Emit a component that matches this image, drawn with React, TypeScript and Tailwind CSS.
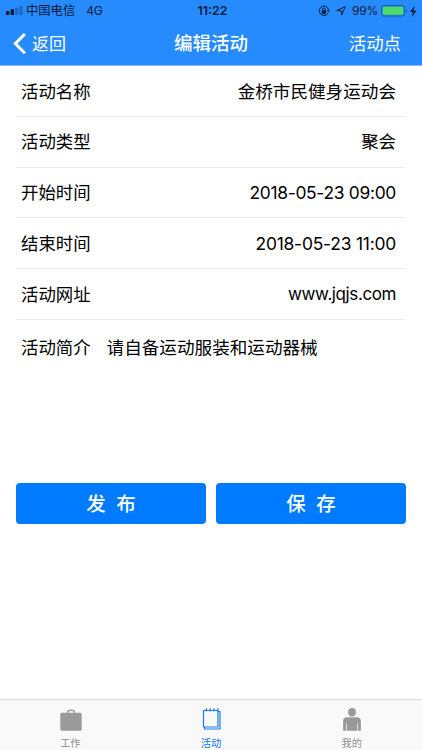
const rows = [
  { label: "活动名称", value: "金桥市民健身运动会", style: "text-[17.6px]" },
  { label: "活动类型", value: "聚会", style: "tracking-normal" },
  { label: "开始时间", value: "2018-05-23 09:00", style: "tracking-[-0.3px]" },
  { label: "结束时间", value: "2018-05-23 11:00", style: "tracking-[-0.2px]" },
  { label: "活动网址", value: "www.jqjs.com", style: "text-[17px] tracking-[-0.4px]" },
];

function StatusBar() {
  return (
    <div className="relative flex h-[22px] items-center justify-between pr-[5px] pl-[6px] text-[12px] leading-none text-[#041a38]">
      <div className="flex items-center">
        <svg width="18" height="9" viewBox="0 0 18 9">
          <rect x="0" y="5" width="3.4" height="4" rx="0.8" fill="#041a38" />
          <rect x="4.6" y="3.3" width="3.4" height="5.7" rx="0.8" fill="#041a38" />
          <rect x="9" y="1.7" width="3.2" height="7.3" rx="0.8" fill="#1c69bd" />
          <rect x="13.3" y="0" width="3.2" height="9" rx="0.8" fill="#1c69bd" />
        </svg>
        <span className="ml-[2px] text-[12.3px]">中国电信</span>
        <span className="ml-[11px] tracking-[-0.2px]">4G</span>
      </div>
      <span className="absolute left-[196px] w-[33px] pt-px text-center text-[12.4px] font-semibold whitespace-nowrap">11:22</span>
      <div className="flex items-center">
        <svg width="12" height="12" viewBox="0 0 12 12" fill="none" stroke="#041a38">
          <path d="M10.2 7.9A4.7 4.7 0 1 1 10.5 4.4" strokeWidth="1" />
          <path d="M8.8 5h3.2l-1.6 2.1z" fill="#041a38" stroke="none" />
          <rect x="3.7" y="5.3" width="4.4" height="3.4" rx="0.4" fill="#041a38" stroke="none" />
          <path d="M4.6 5.4V4.3a1.3 1.3 0 0 1 2.6 0v1.1" strokeWidth="0.9" />
        </svg>
        <svg className="ml-[6px]" width="10" height="10" viewBox="0 0 10 10">
          <path d="M9.2 0.7 5.7 9.1 5.2 4.8 0.8 4.5z" fill="none" stroke="#041a38" strokeWidth="1" strokeLinejoin="round" />
        </svg>
        <span className="ml-[6px] w-[27px] text-[12px] tracking-[-0.2px]">99%</span>
        <svg className="ml-[2px]" width="27" height="12" viewBox="0 0 27 12">
          <rect x="0.5" y="0.5" width="23" height="10.5" rx="2.4" fill="none" stroke="#175ba5" />
          <rect x="1.8" y="1.8" width="20.4" height="7.9" rx="1.3" fill="#4cd964" />
          <path d="M25 4.2c1.2.4 1.2 2.9 0 3.3z" fill="#175ba5" />
        </svg>
        <svg className="ml-[2px]" width="7" height="11" viewBox="0 0 7 11">
          <path d="M4.5 0 0 6.1h2.8L1.8 11l4.7-6.3H3.7z" fill="#041a38" />
        </svg>
      </div>
    </div>
  );
}

function NavBar() {
  return (
    <div className="relative flex h-[43px] items-center justify-between pr-[21px] pl-[13px] text-[17.4px] leading-none text-white">
      <div className="flex items-center">
        <svg width="14" height="22" viewBox="0 0 14 22">
          <path d="M11.9 1 2.3 10.6l9.6 9.6" fill="none" stroke="white" strokeWidth="3" />
        </svg>
        <span className="ml-[5px] pt-px text-[17px]">返回</span>
      </div>
      <h1 className="absolute inset-x-0 text-center text-[18.5px] font-medium">编辑活动</h1>
      <span>活动点</span>
    </div>
  );
}

function BriefcaseIcon() {
  return (
    <svg className="ml-[2px]" width="24" height="24" viewBox="0 0 24 24" fill="#9a9a9a">
      <path d="M8.7 5.4V4C8.7 2.6 9.8 2.2 12 2.2s3.3.4 3.3 1.8v1.4" fill="none" stroke="#9a9a9a" strokeWidth="1.5" />
      <rect x="1.3" y="4.8" width="21.4" height="17.9" rx="1.6" />
    </svg>
  );
}

function NotebookIcon() {
  return (
    <svg className="ml-[2px]" width="20" height="24" viewBox="0 0 20 24" fill="none" stroke="#1b7fe8">
      <path d="M1.5 2.5h14.5v16.5H1.5z" strokeWidth="1.2" />
      <path d="M16 3.5h2V21H2.5v-2" strokeWidth="1.2" />
      <path d="M3.8 3.4 4.7 0.4M7.6 3.4l.9-3M11.4 3.4l.9-3M15.2 3.4l.9-3" strokeWidth="1.4" />
    </svg>
  );
}

function PersonIcon() {
  return (
    <svg className="ml-[1px]" width="20" height="24" viewBox="0 0 20 24" fill="#9a9a9a">
      <ellipse cx="10" cy="4.3" rx="3.9" ry="4.2" />
      <path d="M1.1 22.7V13.2Q1.1 9.2 5 9.2h10q3.9 0 3.9 4v9.5h-3v-7.5h-.7v7.5H4.8v-7.5h-.7v7.5z" />
    </svg>
  );
}

export default function App() {
  return (
    <div className="flex h-[750px] w-[422px] flex-col overflow-hidden bg-white font-['Inter','Noto_Sans_CJK_SC',sans-serif] text-black">
      <header className="h-[66px] shrink-0 border-b border-[#86baf8] bg-[#268bff]">
        <StatusBar />
        <NavBar />
      </header>

      <main className="flex-1 px-[16px] text-[17.4px] leading-none">
        {rows.map((row) => (
          <div
            key={row.label}
            className="flex h-[50.8px] items-center justify-between border-b border-[#ececec] pt-px pr-[10px] pl-[5px]"
          >
            <span>{row.label}</span>
            <span className={row.style}>{row.value}</span>
          </div>
        ))}
        <div className="flex h-[54px] items-center pt-px pl-[5px]">
          <span>活动简介</span>
          <span className="ml-[16px] text-[17.6px]">请自备运动服装和运动器械</span>
        </div>
        <div className="mt-[109px] grid grid-cols-2 gap-[10px] text-[19.5px] font-medium text-white">
          <button className="h-[41px] rounded-[4px] bg-[#007aff] pt-[2px] whitespace-pre">发  布</button>
          <button className="h-[41px] rounded-[4px] bg-[#007aff] pt-[2px] whitespace-pre">保  存</button>
        </div>
      </main>

      <nav className="grid h-[51px] shrink-0 grid-cols-3 border-t border-[#d9d9d9] bg-[#f9f9f9] text-[10.2px] leading-none text-[#8e8e8e]">
        <div className="flex flex-col items-center pt-[8px]">
          <BriefcaseIcon />
          <span className="mt-[6px]">工作</span>
        </div>
        <div className="flex flex-col items-center pt-[8px] text-[#0a78e8]">
          <NotebookIcon />
          <span className="mt-[6px]">活动</span>
        </div>
        <div className="flex flex-col items-center pt-[8px]">
          <PersonIcon />
          <span className="mt-[6px]">我的</span>
        </div>
      </nav>
    </div>
  );
}
